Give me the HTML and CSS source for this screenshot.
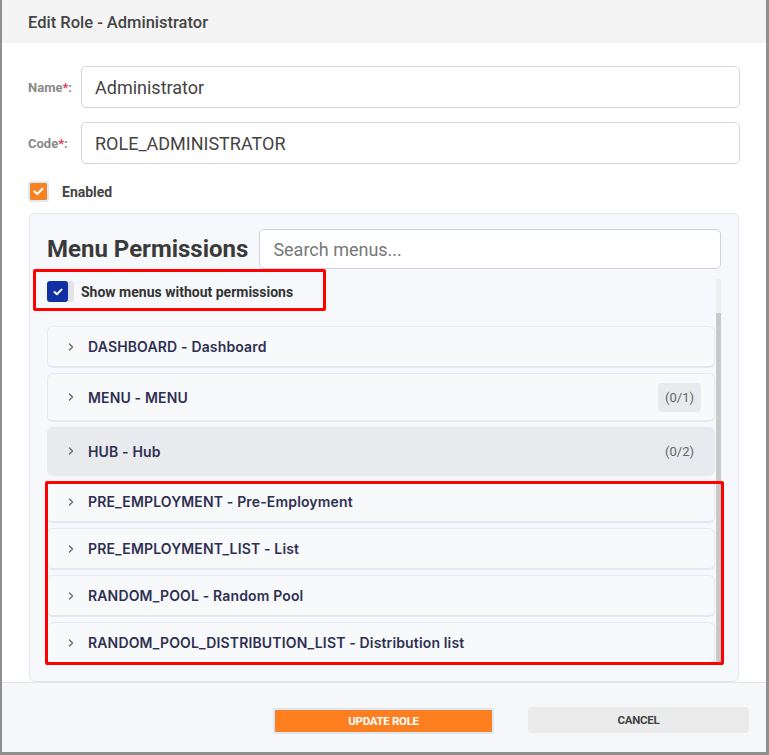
FILE: index.html
```html
<!DOCTYPE html>
<html>
<head>
<meta charset="utf-8">
<link rel="stylesheet" href="styles.css">
</head>
<body>
<div class="modal">
  <div class="modal-header">Edit Role - Administrator</div>
  <div class="modal-body">
    <div class="form-row">
      <label class="form-label">Name<span class="req">*</span>:</label>
      <div class="form-input">Administrator</div>
    </div>
    <div class="form-row">
      <label class="form-label">Code<span class="req">*</span>:</label>
      <div class="form-input">ROLE_ADMINISTRATOR</div>
    </div>
    <div class="enabled-row">
      <span class="check-orange">
        <svg width="11" height="9" viewBox="0 0 11 9"><path d="M1.5 4.5 L4.2 7 L9.5 1.8" fill="none" stroke="#fff" stroke-width="2.2" stroke-linecap="round" stroke-linejoin="round"/></svg>
      </span>
      <span class="enabled-text">Enabled</span>
    </div>

    <div class="panel">
      <div class="panel-head">
        <h2 class="panel-title">Menu Permissions</h2>
        <div class="search">Search menus...</div>
      </div>
      <div class="scroll-area">
        <div class="scroll-content">
          <div class="show-row">
            <span class="check-blue">
              <svg width="10" height="8" viewBox="0 0 10 8"><path d="M1.5 4 L3.9 6.2 L8.5 1.6" fill="none" stroke="#fff" stroke-width="2" stroke-linecap="round" stroke-linejoin="round"/></svg>
            </span>
            <span class="show-text">Show menus without permissions</span>
          </div>
          <div class="menu-list">
            <div class="menu-item">
              <svg class="chev" width="8" height="10" viewBox="0 0 8 10"><path d="M2.5 2 L5.5 5 L2.5 8" fill="none" stroke="#666" stroke-width="1.3" stroke-linecap="round" stroke-linejoin="round"/></svg>
              <span class="menu-name">DASHBOARD - Dashboard</span>
            </div>
            <div class="menu-item tall">
              <svg class="chev" width="8" height="10" viewBox="0 0 8 10"><path d="M2.5 2 L5.5 5 L2.5 8" fill="none" stroke="#666" stroke-width="1.3" stroke-linecap="round" stroke-linejoin="round"/></svg>
              <span class="menu-name">MENU - MENU</span>
              <span class="badge">(0/1)</span>
            </div>
            <div class="menu-item tall hover">
              <svg class="chev" width="8" height="10" viewBox="0 0 8 10"><path d="M2.5 2 L5.5 5 L2.5 8" fill="none" stroke="#666" stroke-width="1.3" stroke-linecap="round" stroke-linejoin="round"/></svg>
              <span class="menu-name">HUB - Hub</span>
              <span class="badge">(0/2)</span>
            </div>
            <div class="menu-item">
              <svg class="chev" width="8" height="10" viewBox="0 0 8 10"><path d="M2.5 2 L5.5 5 L2.5 8" fill="none" stroke="#666" stroke-width="1.3" stroke-linecap="round" stroke-linejoin="round"/></svg>
              <span class="menu-name">PRE_EMPLOYMENT - Pre-Employment</span>
            </div>
            <div class="menu-item">
              <svg class="chev" width="8" height="10" viewBox="0 0 8 10"><path d="M2.5 2 L5.5 5 L2.5 8" fill="none" stroke="#666" stroke-width="1.3" stroke-linecap="round" stroke-linejoin="round"/></svg>
              <span class="menu-name">PRE_EMPLOYMENT_LIST - List</span>
            </div>
            <div class="menu-item">
              <svg class="chev" width="8" height="10" viewBox="0 0 8 10"><path d="M2.5 2 L5.5 5 L2.5 8" fill="none" stroke="#666" stroke-width="1.3" stroke-linecap="round" stroke-linejoin="round"/></svg>
              <span class="menu-name">RANDOM_POOL - Random Pool</span>
            </div>
            <div class="menu-item">
              <svg class="chev" width="8" height="10" viewBox="0 0 8 10"><path d="M2.5 2 L5.5 5 L2.5 8" fill="none" stroke="#666" stroke-width="1.3" stroke-linecap="round" stroke-linejoin="round"/></svg>
              <span class="menu-name">RANDOM_POOL_DISTRIBUTION_LIST - Distribution list</span>
            </div>
          </div>
        </div>
        <div class="scrollbar"><div class="thumb"></div></div>
      </div>
      <div class="mark mark-1"></div>
      <div class="mark mark-2"></div>
    </div>
  </div>
  <div class="modal-footer">
    <button class="btn btn-primary">UPDATE ROLE</button>
    <button class="btn btn-cancel">CANCEL</button>
  </div>
</div>
</body>
</html>
```
FILE: styles.css
```css
html, body {
  margin: 0;
  padding: 0;
}
body {
  background: #8f8f8f;
  width: 769px;
  height: 755px;
  overflow: hidden;
  font-family: Roboto, "Liberation Sans", sans-serif;
}
.modal {
  margin-left: 2px;
  width: 764px;
  height: 752px;
  background: #fff;
  display: flex;
  flex-direction: column;
  overflow: hidden;
}
.modal-header {
  height: 43px;
  flex: none;
  box-sizing: border-box;
  background: #f4f4f4;
  padding: 1px 26px 0 26px;
  display: flex;
  align-items: center;
  font-size: 16.5px;
  font-weight: 500;
  color: #444;
}
.modal-body {
  flex: 1;
  padding: 23px 26px 0 26px;
  display: flex;
  flex-direction: column;
}
.form-row {
  display: flex;
  align-items: center;
  margin-bottom: 14px;
}
.form-label {
  width: 53px;
  flex: none;
  font-size: 13px;
  font-weight: 700;
  color: #8a8a8a;
}
.req {
  color: #e8344e;
}
.form-input {
  flex: 1;
  height: 42px;
  box-sizing: border-box;
  border: 1px solid #d3d7dd;
  border-radius: 5px;
  padding: 0 13px;
  display: flex;
  align-items: center;
  font-size: 18px;
  color: #444;
}
.enabled-row {
  display: flex;
  align-items: center;
  margin-top: 3px;
  height: 21px;
}
.check-orange {
  width: 21px;
  height: 21px;
  box-sizing: border-box;
  border: 2px solid #dde9f5;
  border-radius: 3px;
  background: #f7821f;
  background-clip: padding-box;
  display: flex;
  align-items: center;
  justify-content: center;
}
.enabled-text {
  margin-left: 13px;
  font-size: 14px;
  font-weight: 700;
  color: #444;
}
.panel {
  position: relative;
  margin: 11px 1px 0 1px;
  border: 1px solid #e3e6ed;
  border-radius: 6px;
  background: #f7f8fb;
  padding: 15px 17px 16px 17px;
}
.panel-head {
  display: flex;
  align-items: center;
  gap: 11px;
}
.panel-title {
  margin: 0;
  font-size: 24px;
  font-weight: 700;
  color: #3a3a3a;
  white-space: nowrap;
}
.search {
  flex: 1;
  height: 40px;
  box-sizing: border-box;
  background: #fff;
  border: 1px solid #cfd2d8;
  border-radius: 5px;
  padding: 0 13px;
  display: flex;
  align-items: center;
  font-size: 18px;
  color: #777;
}
.scroll-area {
  margin-top: 10px;
  height: 386px;
  display: flex;
  gap: 1px;
  overflow: hidden;
}
.scroll-content {
  flex: 1;
  overflow: hidden;
}
.show-row {
  display: flex;
  align-items: center;
  padding-top: 2px;
  height: 21px;
}
.check-blue {
  width: 21px;
  height: 21px;
  border-radius: 3px;
  background: #1130a4;
  box-shadow: 6px 0 0 0 #e1e3e9;
  display: flex;
  align-items: center;
  justify-content: center;
}
.show-text {
  margin-left: 13px;
  font-size: 14px;
  font-weight: 700;
  color: #333;
}
.menu-list {
  margin-top: 24px;
  display: flex;
  flex-direction: column;
  gap: 5px;
}
.menu-item {
  height: 42px;
  box-sizing: border-box;
  border: 1px solid #e6e9f0;
  border-bottom: 2px solid #e3e7ef;
  border-radius: 6px;
  background: #f8f9fb;
  display: flex;
  align-items: center;
  padding: 0 13px 0 19px;
  flex: none;
}
.menu-item.tall {
  height: 49px;
}
.menu-item.hover {
  background: #e8eaee;
  border-color: #e8eaee;
}
.chev {
  flex: none;
}
.menu-name {
  margin-left: 13px;
  flex: 1;
  font-family: Inter, Roboto, sans-serif;
  font-size: 14px;
  font-weight: 600;
  letter-spacing: 0.15px;
  color: #2e3052;
  white-space: nowrap;
}
.badge {
  height: 29px;
  padding: 0 7px;
  border-radius: 4px;
  background: #e8eaee;
  display: flex;
  align-items: center;
  font-size: 13px;
  color: #666;
}
.scrollbar {
  width: 5px;
  flex: none;
  background: #efefef;
  position: relative;
}
.thumb {
  margin-top: 34px;
  height: 352px;
  background: #c9c9c9;
}
.mark {
  position: absolute;
  box-sizing: border-box;
  border: 3px solid #ff0000;
  border-radius: 2px;
  pointer-events: none;
}
.mark-1 {
  left: 3px;
  top: 55px;
  width: 293px;
  height: 42px;
}
.mark-2 {
  left: 15px;
  top: 267px;
  width: 679px;
  height: 184px;
}
.modal-footer {
  flex: none;
  height: 70px;
  box-sizing: border-box;
  border-top: 1px solid #e1e4ea;
  background: #f6f7f9;
  display: flex;
  justify-content: flex-end;
  align-items: flex-start;
  gap: 34px;
  padding: 24px 17px 0 0;
}
.btn {
  width: 221px;
  height: 26px;
  border-radius: 3px;
  font-family: Roboto, sans-serif;
  font-size: 11.5px;
  font-weight: 700;
  letter-spacing: -0.3px;
  cursor: pointer;
}
.btn-primary {
  margin-top: 1px;
  background: #fd7f1f;
  color: #fff;
  border: 2px solid #dbe7f4;
}
.btn-cancel {
  background: #ebebeb;
  color: #444;
  border: none;
  border-radius: 4px;
}
```
